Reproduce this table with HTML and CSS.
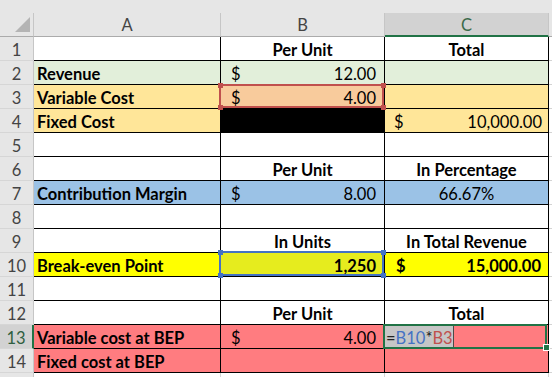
FILE: index.html
```html
<!DOCTYPE html>
<html>
<head>
<meta charset="utf-8">
<link rel="stylesheet" href="styles.css">
</head>
<body>
<div class="sheet">
  <div class="topbar"></div>
  <div class="grid">
    <div class="corner"><svg width="34" height="24" viewBox="0 0 34 24"><polygon points="30,4 30,19 15,19" fill="#b4b4b4"/></svg></div>
    <div class="ch">A</div>
    <div class="ch">B</div>
    <div class="ch ch-sel">C</div>
    <div class="ch ch-d"></div>

    <div class="rh">1</div>
    <div class="c"></div>
    <div class="c b center">Per Unit</div>
    <div class="c b center">Total</div>
    <div class="d"></div>

    <div class="rh">2</div>
    <div class="c b lbl green">Revenue</div>
    <div class="c acct green"><span>$</span><span>12.00</span></div>
    <div class="c green"></div>
    <div class="d"></div>

    <div class="rh">3</div>
    <div class="c b lbl gold">Variable Cost</div>
    <div class="c acct peach rel"><span>$</span><span>4.00</span>
      <div class="ref ref-red"><i class="h tl"></i><i class="h tr"></i><i class="h bl"></i><i class="h br"></i></div>
    </div>
    <div class="c gold"></div>
    <div class="d"></div>

    <div class="rh">4</div>
    <div class="c b lbl gold">Fixed Cost</div>
    <div class="c black"></div>
    <div class="c acct acct-c gold"><span>$</span><span>10,000.00</span></div>
    <div class="d"></div>

    <div class="rh">5</div>
    <div class="c"></div>
    <div class="c"></div>
    <div class="c"></div>
    <div class="d"></div>

    <div class="rh">6</div>
    <div class="c"></div>
    <div class="c b center">Per Unit</div>
    <div class="c b center">In Percentage</div>
    <div class="d"></div>

    <div class="rh">7</div>
    <div class="c b lbl blue">Contribution Margin</div>
    <div class="c acct blue"><span>$</span><span>8.00</span></div>
    <div class="c center blue">66.67%</div>
    <div class="d"></div>

    <div class="rh">8</div>
    <div class="c"></div>
    <div class="c"></div>
    <div class="c"></div>
    <div class="d"></div>

    <div class="rh">9</div>
    <div class="c"></div>
    <div class="c b center">In Units</div>
    <div class="c b center">In Total Revenue</div>
    <div class="d"></div>

    <div class="rh">10</div>
    <div class="c b lbl yellow">Break-even Point</div>
    <div class="c b num yellow2 rel">1,250
      <div class="ref ref-blue"><i class="h tl"></i><i class="h tr"></i><i class="h bl"></i><i class="h br"></i></div>
    </div>
    <div class="c b acct acct-c10 yellow"><span>$</span><span>15,000.00</span></div>
    <div class="d"></div>

    <div class="rh">11</div>
    <div class="c"></div>
    <div class="c"></div>
    <div class="c"></div>
    <div class="d"></div>

    <div class="rh">12</div>
    <div class="c"></div>
    <div class="c b center">Per Unit</div>
    <div class="c b center">Total</div>
    <div class="d"></div>

    <div class="rh rh-sel">13</div>
    <div class="c b lbl salmon">Variable cost at BEP</div>
    <div class="c acct salmon"><span>$</span><span>4.00</span></div>
    <div class="c salmon rel edit-cell"><span class="edit"><span class="op">=</span><span class="r1">B10</span><span class="op">*</span><span class="r2">B3</span></span>
      <div class="active"><i class="fill-handle"></i></div>
    </div>
    <div class="d"></div>

    <div class="rh">14</div>
    <div class="c b lbl salmon">Fixed cost at BEP</div>
    <div class="c salmon"></div>
    <div class="c salmon"></div>
    <div class="d"></div>

    <div class="rh rh-last"></div>
    <div class="c g"></div>
    <div class="c g"></div>
    <div class="c g"></div>
    <div class="d d-last"></div>
  </div>
</div>
</body>
</html>
```
FILE: styles.css
```css
* {
  box-sizing: border-box;
  margin: 0;
  padding: 0;
}

html, body {
  width: 552px;
  height: 377px;
  overflow: hidden;
}

body {
  background: #ffffff;
  font-family: Lato, "Liberation Sans", sans-serif;
  font-size: 16.5px;
  color: #000000;
}

.topbar {
  height: 13px;
  background: #e6e6e6;
}

.grid {
  display: grid;
  grid-template-columns: 34px 187px 164px 164px 3px;
  grid-template-rows: 24px repeat(14, 24px) 4px;
}

.corner {
  background: #e6e6e6;
  border-right: 1px solid #c6c6c6;
  border-bottom: 1px solid #ababab;
  overflow: hidden;
}

.corner svg {
  display: block;
}

.ch {
  background: #e6e6e6;
  border-right: 1px solid #c6c6c6;
  border-bottom: 1px solid #ababab;
  color: #444444;
  text-align: center;
  padding-top: 2px;
  line-height: 21px;
}

.ch-sel {
  background: #d2d2d2;
  color: #3b6b4b;
  border-bottom: 2px solid #217346;
}

.ch-d {
  border-right: none;
}

.rh {
  background: #e6e6e6;
  border-right: 1px solid #c6c6c6;
  border-bottom: 1px solid #d6d6d6;
  color: #444444;
  text-align: center;
  padding-top: 3px;
  line-height: 21px;
  overflow: hidden;
}

.rh-sel {
  background: #d2d2d2;
  color: #2f5f40;
  border-right: 2px solid #217346;
}

.rh-last {
  border-bottom: none;
}

.c {
  border-right: 1px solid #000000;
  border-bottom: 1px solid #000000;
  padding-top: 3px;
  line-height: 21px;
  white-space: nowrap;
}

.c.g {
  border-right: 1px solid #d4d4d4;
  border-bottom: none;
  padding-top: 0;
}

.d {
  border-bottom: 1px solid #d4d4d4;
}

.d-last {
  border-bottom: none;
}

.b {
  font-weight: 700;
}

.lbl {
  padding-left: 3px;
}

.center {
  text-align: center;
}

.num {
  text-align: right;
  padding-right: 8px;
}

.acct {
  display: flex;
  justify-content: space-between;
  padding-left: 10px;
  padding-right: 8px;
}

.acct-c {
  padding-left: 9px;
  padding-right: 6px;
}

.acct-c10 {
  padding-left: 11px;
  padding-right: 7px;
}

.green { background: #e2efda; }
.gold { background: #ffe699; }
.peach { background: #f8cb9c; }
.black { background: #000000; }
.blue { background: #9bc2e6; }
.yellow { background: #ffff00; }
.yellow2 { background: #e6ec1e; }
.salmon { background: #ff7c80; }

.rel {
  position: relative;
}

.ref {
  position: absolute;
  z-index: 2;
  border: 2px solid;
  pointer-events: none;
}

.ref-red {
  top: -1px;
  left: -2px;
  right: 0;
  bottom: 0;
  border-color: #c0504d;
}

.ref-blue {
  top: -2px;
  left: -2px;
  right: 0;
  bottom: 0;
  border-color: #4472c4;
}

.h {
  position: absolute;
  width: 5px;
  height: 5px;
}

.ref-red .h { background: #c0504d; }
.ref-blue .h { background: #4472c4; }

.h.tl { top: -3.5px; left: -3.5px; }
.h.tr { top: -3.5px; right: -3.5px; }
.h.bl { bottom: -3.5px; left: -3.5px; }
.h.br { bottom: -3.5px; right: -3.5px; }

.edit-cell {
  padding-top: 1px;
}

.edit {
  display: inline-block;
  height: 22px;
  padding-top: 2px;
  line-height: 20px;
  padding-left: 1px;
  background: #c6c6c6;
  border-right: 1px solid #4a4a4a;
  vertical-align: top;
}

.op { color: #222222; }
.r1 { color: #4472c4; }
.r2 { color: #c0504d; }

.active {
  position: absolute;
  z-index: 2;
  top: -1px;
  left: -2px;
  right: 1px;
  bottom: -1px;
  border: 2px solid #217346;
}

.fill-handle {
  position: absolute;
  right: -5px;
  bottom: -4px;
  width: 5px;
  height: 5px;
  background: #217346;
  border: 1px solid #ffffff;
  box-sizing: content-box;
}
```
